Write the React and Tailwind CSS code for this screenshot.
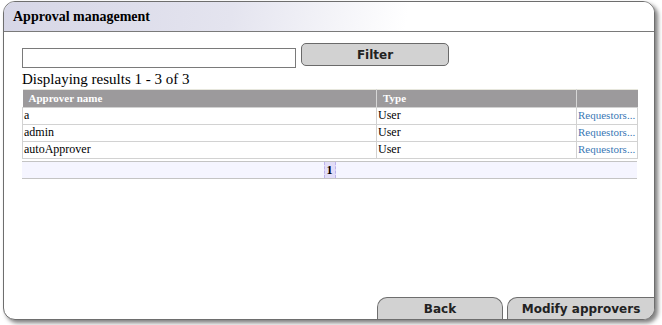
import React from "react"

const rows = [
  { name: "a", type: "User" },
  { name: "admin", type: "User" },
  { name: "autoApprover", type: "User" },
]

export default function App() {
  return (
    <div className="w-[662px] h-[325px] bg-white pt-[1px] pl-[3px]">
      <div className="w-[652px] h-[319px] border border-[#6e6e6e] rounded-[12px] shadow-[3px_3px_4px_rgba(0,0,0,0.5)] flex flex-col overflow-hidden bg-white">
        <div className="h-[30px] shrink-0 border-b border-[#7a7a7a] bg-[linear-gradient(100deg,#d6d6e6_0%,#e4e4ef_35%,#ffffff_62%)] flex items-center pl-[9px]">
          <h1 className="font-['Liberation_Serif',serif] font-bold text-[14px] text-black">
            Approval management
          </h1>
        </div>

        <div className="pl-[18px] pr-[16px] pt-[11px]">
          <div className="flex items-start">
            <input
              className="mt-[5px] w-[274px] h-[20px] border border-[#7a7a7a] bg-white outline-none"
              type="text"
            />
            <button className="ml-[5px] w-[148px] h-[23px] rounded-[5px] border border-[#6a6a6a] bg-[#d2d2d2] font-['DejaVu_Sans',sans-serif] font-bold text-[12px] text-[#222]">
              Filter
            </button>
          </div>

          <p className="mt-[3px] font-['Liberation_Serif',serif] text-[15px] leading-[17px] text-black">
            Displaying results 1 - 3 of 3
          </p>

          <table className="mt-[1px] w-[615px] border-collapse table-fixed font-['Liberation_Serif',serif]">
            <colgroup>
              <col className="w-[354px]" />
              <col className="w-[200px]" />
              <col className="w-[61px]" />
            </colgroup>
            <thead>
              <tr className="h-[17px] bg-[#9c9a9c] text-white text-[11px] font-bold text-left">
                <th className="pl-[6px] border-r border-[#d6d6d6] border-t border-t-[#e6e6dc]">Approver name</th>
                <th className="pl-[6px] border-r border-[#d6d6d6] border-t border-t-[#e6e6dc]">Type</th>
                <th className="border-t border-t-[#e6e6dc]"></th>
              </tr>
            </thead>
            <tbody>
              {rows.map((r) => (
                <tr key={r.name} className="h-[17px] text-[12px] leading-[15px] bg-white">
                  <td className="pl-[1px] border border-[#d2d2d2]">{r.name}</td>
                  <td className="pl-[1px] border border-[#d2d2d2]">{r.type}</td>
                  <td className="pl-[1px] border border-[#d2d2d2] whitespace-nowrap text-[11px] text-[#3a78b5]">
                    Requestors...
                  </td>
                </tr>
              ))}
            </tbody>
          </table>

          <div className="mt-[2px] w-[615px] h-[18px] bg-[#f5f5ff] border-t border-b border-[#c4c4c4] flex justify-center">
            <span className="w-[12px] h-full bg-[#e2ddf8] border-l border-r border-dashed border-[#bdb2ec] flex items-center justify-center font-['Liberation_Serif',serif] font-bold text-[12px] text-black">
              1
            </span>
          </div>
        </div>

        <div className="flex-1" />

        <div className="flex justify-end items-end gap-[4px] h-[22px] shrink-0">
          <button className="w-[126px] h-full rounded-t-[10px] border-t border-l border-r border-[#6e6e6e] bg-[#d2d2d2] font-['DejaVu_Sans',sans-serif] font-bold text-[12px] text-[#222]">
            Back
          </button>
          <button className="w-[147px] h-full rounded-tl-[10px] border-t border-l border-[#6e6e6e] bg-[#d2d2d2] font-['DejaVu_Sans',sans-serif] font-bold text-[12px] text-[#222]">
            Modify approvers
          </button>
        </div>
      </div>
    </div>
  )
}
